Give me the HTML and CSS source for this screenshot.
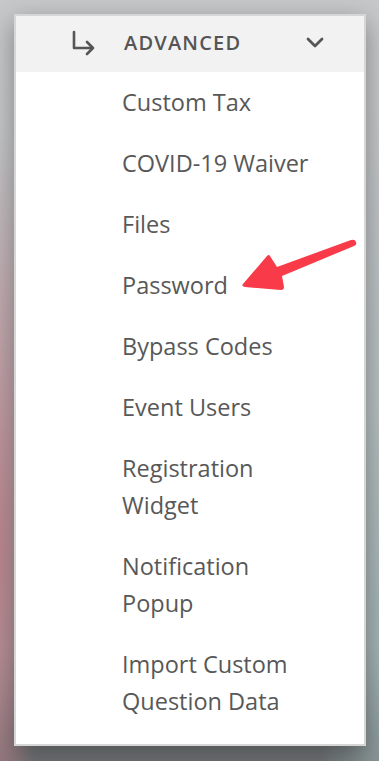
FILE: index.html
```html
<!DOCTYPE html>
<html lang="en">
<head>
    <meta charset="UTF-8">
    <meta name="viewport" content="width=device-width, initial-scale=1.0">
    <title>Advanced Menu</title>
    <link rel="stylesheet" href="styles.css">
</head>
<body>
    <div class="backdrop">
        <div class="menu">
            <div class="menu-header">
                <svg class="sub-icon" width="26" height="26" viewBox="0 0 26 26">
                    <path d="M3 2 V18 H22 M16 12 L22 18 L16 24" fill="none" stroke="#555" stroke-width="2.6" stroke-linecap="round" stroke-linejoin="round"/>
                </svg>
                <span class="menu-title">ADVANCED</span>
                <svg class="chevron" width="18" height="12" viewBox="0 0 18 12">
                    <path d="M2 2 L9 9 L16 2" fill="none" stroke="#555" stroke-width="2.8" stroke-linecap="round" stroke-linejoin="round"/>
                </svg>
            </div>

            <ul class="menu-list">
                <li>Custom Tax</li>
                <li>COVID-19 Waiver</li>
                <li>Files</li>
                <li>Password
                    <!-- annotation arrow -->
                    <svg class="pointer" width="130" height="60" viewBox="0 0 130 60">
                        <path d="M11 47 L35 19 Q37 17 38 19 L45 30 L119 3 Q123 2 124 5 Q125 8 122 9 L50 39 L52 50 Q52 53 49 53 L13 50 Q9 49 11 47 Z" fill="#f93a48"/>
                    </svg>
                </li>
                <li>Bypass Codes</li>
                <li>Event Users</li>
                <li>Registration Widget</li>
                <li>Notification Popup</li>
                <li>Import Custom Question Data</li>
            </ul>
        </div>
    </div>
</body>
</html>
```

FILE: styles.css
```css
* {
    margin: 0;
    padding: 0;
    box-sizing: border-box;
}

body {
    width: 379px;
    height: 761px;
    overflow: hidden;
    font-family: 'Open Sans', 'Noto Sans', sans-serif;
}

.backdrop {
    height: 100%;
    padding: 14px 13px 15px 14px;
    background:
        radial-gradient(ellipse 40px 420px at 0% 72%, rgba(190, 125, 135, 0.85), rgba(190, 125, 135, 0) 100%),
        radial-gradient(ellipse 60px 500px at 100% 85%, rgba(160, 185, 185, 0.6), rgba(160, 185, 185, 0) 100%),
        linear-gradient(180deg, #c6c8ca 0%, #bfc1c3 55%, #a9abad 85%, #707375 100%);
}

.menu {
    height: 732px;
    width: 352px;
    background: #fff;
    border: 2px solid #d6d6d6;
    box-shadow: 0 8px 24px rgba(0, 0, 0, 0.35);
}

.menu-header {
    height: 56px;
    background: #f2f2f2;
    display: flex;
    align-items: center;
    padding-left: 55px;
    padding-bottom: 3px;
}

.menu-title {
    margin-left: 27px;
    font-weight: 600;
    font-size: 20px;
    letter-spacing: 1.2px;
    color: #555;
}

.chevron {
    margin-left: auto;
    margin-right: 40px;
}

.menu-list {
    list-style: none;
    padding-left: 106px;
}

.menu-list li {
    width: 200px;
    padding: 12px 0;
    font-size: 23.5px;
    line-height: 37px;
    color: #585858;
    position: relative;
}

.pointer {
    position: absolute;
    left: 110px;
    top: -18px;
}
```
